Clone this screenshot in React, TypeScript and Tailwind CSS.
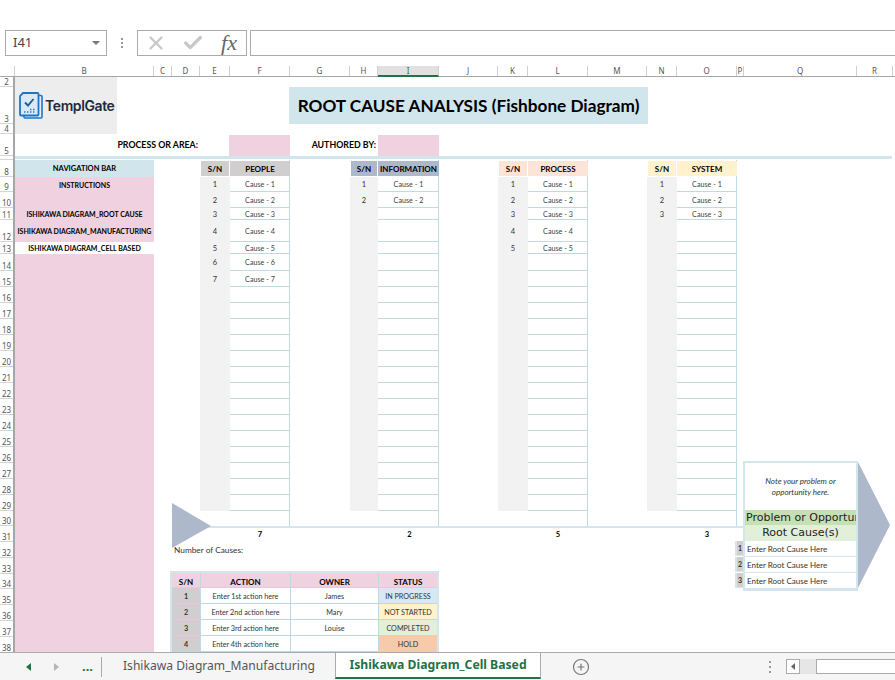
import { X, Check, CirclePlus } from "lucide-react"

const lato = "font-['Lato','Liberation_Sans',sans-serif]"

const columns: [string, string][] = [
  ["B", "w-[139px]"],
  ["C", "w-[18px]"],
  ["D", "w-[28px]"],
  ["E", "w-[30px]"],
  ["F", "w-[60px]"],
  ["G", "w-[60px]"],
  ["H", "w-[28px]"],
  ["I", "w-[61px]"],
  ["J", "w-[59px]"],
  ["K", "w-[30px]"],
  ["L", "w-[60px]"],
  ["M", "w-[59px]"],
  ["N", "w-[30px]"],
  ["O", "w-[60px]"],
  ["P", "w-[7px]"],
  ["Q", "w-[113px]"],
  ["R", "w-[36px]"],
]

const rowHeaders: [string, string][] = [
  ["2", "h-[10px]"],
  ["3", "h-[37px]"],
  ["4", "h-[10px]"],
  ["5", "h-[22px]"],
  ["", "h-[4px]"],
  ["8", "h-[17px]"],
  ["9", "h-[15px]"],
  ["10", "h-[16px]"],
  ["11", "h-[12px]"],
  ["12", "h-[22px]"],
  ["13", "h-[12px]"],
  ["14", "h-[17px]"],
  ["15", "h-[16px]"],
  ...Array.from({ length: 14 }, (_, i): [string, string] => [String(16 + i), "h-[16px]"]),
  ["30", "h-[15px]"],
  ["31", "h-[16px]"],
  ["32", "h-[16px]"],
  ["33", "h-[16px]"],
  ["34", "h-[15px]"],
  ["35", "h-[16px]"],
  ["36", "h-[16px]"],
  ["37", "h-[16px]"],
  ["38", "h-[16px]"],
]

const navItems: [string, string][] = [
  ["INSTRUCTIONS", "h-[31px] items-start pt-[3px] bg-[#efd1e0]"],
  ["ISHIKAWA DIAGRAM_ROOT CAUSE", "h-[12px] items-center bg-[#efd1e0]"],
  ["ISHIKAWA DIAGRAM_MANUFACTURING", "h-[22px] items-center bg-[#efd1e0]"],
  ["ISHIKAWA DIAGRAM_CELL BASED", "h-[12px] items-center bg-white"],
]

const causeTables = [
  { title: "PEOPLE", count: 7, causes: 7, head: "bg-[#d0cece]", width: "w-[90px]", cols: "grid-cols-[30px_60px]", gap: "ml-[46px]" },
  { title: "INFORMATION", count: 2, causes: 2, head: "bg-[#adb9ca]", width: "w-[89px]", cols: "grid-cols-[28px_61px]", gap: "ml-[60px]" },
  { title: "PROCESS", count: 5, causes: 5, head: "bg-[#fce4d6]", width: "w-[90px]", cols: "grid-cols-[30px_60px]", gap: "ml-[59px]" },
  { title: "SYSTEM", count: 3, causes: 3, head: "bg-[#fff2cc]", width: "w-[90px]", cols: "grid-cols-[30px_60px]", gap: "ml-[59px]" },
]

const actions = [
  { n: 1, action: "Enter 1st action here", owner: "James", status: "IN PROGRESS", tone: "bg-[#d9e7f3]" },
  { n: 2, action: "Enter 2nd action here", owner: "Mary", status: "NOT STARTED", tone: "bg-[#fff2cc]" },
  { n: 3, action: "Enter 3rd action here", owner: "Louise", status: "COMPLETED", tone: "bg-[#e2efd9]" },
  { n: 4, action: "Enter 4th action here", owner: "", status: "HOLD", tone: "bg-[#f7caac]" },
]

function Logo() {
  return (
    <div className="flex h-[57px] w-[102px] items-center gap-[2px] bg-[#ededed] pl-[4px]">
      <svg width="24" height="27" viewBox="0 0 24 27" className="shrink-0">
        <path d="M19.5 3.5h2.5a1 1 0 0 1 1 1V25a1 1 0 0 1-1 1H6a1 1 0 0 1-1-1v-1.5" fill="none" stroke="#1b75c9" strokeWidth="1.6" />
        <path d="M4 1h14.5a1 1 0 0 1 1 1v20.5a1 1 0 0 1-1 1H2a1 1 0 0 1-1-1V4z" fill="#dbe9f6" stroke="#1b75c9" strokeWidth="1.8" />
        <path d="M6 10.5l3 3 5.5-6.5" fill="none" stroke="#1a5f9e" strokeWidth="1.9" />
        <path d="M5 20h1.4M8 20h1.4M11 20h1.4M14 20h1.4M11 17.5h1.4M14 17.5h1.4" stroke="#1b75c9" strokeWidth="1.5" />
      </svg>
      <span className="font-['Inter',sans-serif] text-[14px] font-semibold tracking-[-0.4px] text-[#1f2a3a]">TemplGate</span>
    </div>
  )
}

function CauseTable({ table }: { table: (typeof causeTables)[number] }) {
  const rows = Array.from({ length: 22 }, (_, i) => i)
  return (
    <div
      className={`grid h-[366px] shrink-0 ${table.width} ${table.cols} ${table.gap} grid-rows-[17px_15px_16px_12px_22px_12px_17px_16px_repeat(14,16px)_15px] border-r border-[#bedbe5]`}
    >
      <div className={`m-[1px] flex items-center justify-center text-[8px] font-bold text-black ${table.head}`}>S/N</div>
      <div className={`my-[1px] flex items-center justify-center text-[8px] font-bold text-black ${table.head}`}>{table.title}</div>
      {rows.map((i) => (
        <div key={i} className="contents">
          <div className={`flex items-center justify-center pt-px text-[7.5px] text-[#333] ${i < 21 ? "bg-[#f2f2f2]" : ""}`}>
            {i < table.causes ? i + 1 : ""}
          </div>
          <div className={`flex items-center justify-center pt-[3px] text-[7.2px] text-[#444] ${i < 21 ? "border-b border-[#bedbe5]" : ""}`}>
            {i < table.causes ? `Cause - ${i + 1}` : ""}
          </div>
        </div>
      ))}
    </div>
  )
}

function ActionTable() {
  const cell = "flex items-center justify-center pt-[3px] border-b border-l border-[#bedbe5]"
  return (
    <div className="ml-[16px] w-[269px] border-x-2 border-t-2 border-[#d3e6ec]">
      <div className="grid grid-cols-[28px_90px_88px_59px] grid-rows-[15px_repeat(4,16px)] text-[7.2px] text-[#333]">
        <div className="flex items-center justify-center border-b border-[#bedbe5] bg-[#efd1e0] pt-[3px] text-[8px] font-bold text-black">S/N</div>
        <div className={`${cell} bg-[#efd1e0] text-[8px] font-bold text-black`}>ACTION</div>
        <div className={`${cell} bg-[#efd1e0] text-[8px] font-bold text-black`}>OWNER</div>
        <div className={`${cell} bg-[#efd1e0] text-[8px] font-bold text-black`}>STATUS</div>
        {actions.map((a) => (
          <div key={a.n} className="contents">
            <div className="flex items-center justify-center border-b border-[#bedbe5] bg-[#d0cece] pt-[3px] font-bold">{a.n}</div>
            <div className={cell}>{a.action}</div>
            <div className={cell}>{a.owner}</div>
            <div className={`${cell} ${a.tone}`}>{a.status}</div>
          </div>
        ))}
      </div>
    </div>
  )
}

function ProblemBox() {
  return (
    <div className="absolute left-[728px] top-[301px] w-[115px] border-2 border-[#d3e6ec] bg-white">
      <div className="flex h-[47px] flex-col items-center justify-center text-[8px] leading-[11px] italic text-[#333]">
        <span>Note your problem or</span>
        <span>opportunity here.</span>
      </div>
      <div className="h-[15px] overflow-hidden whitespace-nowrap bg-[#c5e0b3] pl-[1px] font-['DejaVu_Sans',sans-serif] text-[11px] leading-[15px] text-[#222]">
        Problem or Opportunity
      </div>
      <div className="h-[16px] bg-[#e2efd9] text-center font-['DejaVu_Sans',sans-serif] text-[11px] leading-[16px] text-[#222]">
        Root Cause(s)
      </div>
      {[1, 2, 3].map((n) => (
        <div key={n} className="relative flex h-[16px] items-center border-b border-[#d3e6ec] pl-[2px] text-[8px] text-[#333]">
          <span className="absolute left-[-10px] top-0 flex h-full w-[8px] items-center justify-center border-b border-l-2 border-[#d3e6ec] bg-[#d0cece] text-[7px] font-bold">
            {n}
          </span>
          Enter Root Cause Here
        </div>
      ))}
    </div>
  )
}

function Fishbone() {
  return (
    <div className={`relative h-[492px] overflow-hidden ${lato}`}>
      <div className="flex h-full">
        <div className="flex w-[139px] shrink-0 flex-col">
          <div className="flex h-[17px] items-center justify-center bg-[#d0e5ec] text-[7.5px] font-bold text-black">NAVIGATION BAR</div>
          {navItems.map(([label, cls]) => (
            <div key={label} className={`flex shrink-0 justify-center whitespace-nowrap text-[7px] font-bold text-black ${cls}`}>
              {label}
            </div>
          ))}
          <div className="flex-1 bg-[#efd1e0]" />
        </div>
        <div className="min-w-0 flex-1">
          <div className="flex">
            {causeTables.map((t) => (
              <CauseTable key={t.title} table={t} />
            ))}
          </div>
          <div className="ml-[18px] h-[2px] w-[572px] bg-[#d3e6ec]" />
          <div className="flex h-[14px] items-center">
            {causeTables.map((t) => (
              <div key={t.title} className={`${t.width} ${t.gap} shrink-0 pl-[30px] text-center text-[7.5px] font-bold text-black`}>
                {t.count}
              </div>
            ))}
          </div>
          <div className="ml-[20px] flex h-[16px] items-center text-[8.3px] text-[#333]">Number of Causes:</div>
          <div className="h-[13px]" />
          <ActionTable />
        </div>
      </div>
      <ProblemBox />
      {/* fish tail and head */}
      <svg width="40" height="46" className="absolute left-[157px] top-[343px]">
        <polygon points="0,0 39,23 0,45" fill="#adb9ca" />
      </svg>
      <svg width="34" height="128" className="absolute left-[843px] top-[302px]">
        <polygon points="0,0 32,63 0,126" fill="#adb9ca" />
      </svg>
    </div>
  )
}

export default function App() {
  return (
    <div className="flex h-[680px] w-[895px] flex-col overflow-hidden bg-white font-['Noto_Sans',sans-serif]">
      <div className="flex h-[56px] shrink-0 items-end pl-[5px]">
        <div className="flex h-[26px] w-[102px] items-center justify-between border border-[#ababab] pl-[7px] pr-[6px] text-[13px] text-[#444]">
          I41
          <span className="h-0 w-0 border-x-[4px] border-t-[4px] border-x-transparent border-t-[#777]" />
        </div>
        <div className="mx-[13px] flex h-[26px] w-[4px] flex-col items-center justify-center gap-[2px]">
          <span className="h-[2px] w-[2px] bg-[#999]" />
          <span className="h-[2px] w-[2px] bg-[#999]" />
          <span className="h-[2px] w-[2px] bg-[#999]" />
        </div>
        <div className="flex h-[26px] w-[110px] items-center justify-between border border-[#ababab] pl-[7px] pr-[9px]">
          <X className="h-[22px] w-[22px] text-[#c8c8c8]" strokeWidth={2.5} />
          <Check className="mr-[2px] h-[22px] w-[22px] text-[#c8c8c8]" strokeWidth={3.5} />
          <span className="font-['Liberation_Serif',serif] text-[22px] italic leading-none text-[#666]">fx</span>
        </div>
        <div className="ml-[3px] h-[26px] flex-1 border border-r-0 border-[#ababab]" />
      </div>
      <div className="h-[10px] shrink-0" />
      <div className="flex h-[11px] shrink-0 border-b border-[#a6a6a6] text-[8px] leading-[10px] text-[#555]">
        <div className="w-[15px] shrink-0 border-r border-[#d0d0d0]" />
        {columns.map(([name, w]) => (
          <div
            key={name}
            className={`shrink-0 border-r border-[#d0d0d0] text-center ${w} ${name === "I" ? "h-[11px] border-b-2 border-b-[#217346] bg-[#e1e1e1] text-[#217346]" : ""}`}
          >
            {name}
          </div>
        ))}
      </div>
      <div className="flex h-[575px] shrink-0">
        <div className="w-[15px] shrink-0 overflow-hidden border-r-2 border-[#a6a6a6] text-[8px] text-[#555]">
          {rowHeaders.map(([label, h], i) => (
            <div key={i} className={`flex items-end justify-center border-b border-[#d4d4d4] leading-[9px] ${h}`}>
              {label}
            </div>
          ))}
        </div>
        <div className="min-w-0 flex-1">
          <div className={`flex h-[57px] items-start ${lato}`}>
            <Logo />
            <div className="ml-[172px] mt-[10px] flex h-[37px] w-[359px] items-center justify-center bg-[#d0e5ec] pt-px text-[17.2px] font-bold text-black">
              ROOT CAUSE ANALYSIS (Fishbone Diagram)
            </div>
          </div>
          <div className={`flex h-[22px] items-center text-[8.8px] font-bold text-black ${lato}`}>
            <div className="w-[183px] text-right">PROCESS OR AREA:</div>
            <div className="ml-[31px] h-[21px] w-[61px] bg-[#efd1e0]" />
            <div className="w-[86px] text-right">AUTHORED BY:</div>
            <div className="ml-[2px] h-[21px] w-[61px] bg-[#efd1e0]" />
          </div>
          <div className="h-[3px] w-[877px] bg-[#d0e5ec]" />
          <div className="h-[1px]" />
          <Fishbone />
        </div>
      </div>
      <div className="flex h-[28px] shrink-0 items-center border-t border-[#ababab] bg-[#f5f5f5] text-[12.2px]">
        <svg width="6" height="8" className="ml-[26px] shrink-0"><polygon points="5,0 5,8 0,4" fill="#217346" /></svg>
        <svg width="6" height="8" className="ml-[22px] shrink-0"><polygon points="0,0 0,8 5,4" fill="#b5b5b5" /></svg>
        <span className="ml-[22px] w-[14px] text-[13px] font-bold leading-none text-[#217346]">...</span>
        <div className="ml-[5px] h-[20px] w-px bg-[#ababab]" />
        <span className="ml-[21px] w-[192px] whitespace-nowrap text-[12.1px] text-[#555]">Ishikawa Diagram_Manufacturing</span>
        <div className="ml-[20px] flex h-[26px] w-[206px] items-center justify-center self-start border-x border-b-2 border-x-[#ababab] border-b-[#217346] bg-white font-bold text-[#217346]">
          Ishikawa Diagram_Cell Based
        </div>
        <CirclePlus className="ml-[31px] h-[18px] w-[18px] shrink-0 text-[#777]" strokeWidth={1.6} />
        <div className="ml-[179px] flex h-[12px] w-[2px] shrink-0 flex-col justify-between">
          <span className="h-[2px] w-[2px] bg-[#999]" />
          <span className="h-[2px] w-[2px] bg-[#999]" />
          <span className="h-[2px] w-[2px] bg-[#999]" />
        </div>
        <div className="ml-[15px] flex h-[15px] w-[14px] shrink-0 items-center justify-center border border-[#ababab] bg-white">
          <svg width="5" height="7"><polygon points="4,0 4,7 0,3.5" fill="#666" /></svg>
        </div>
        <div className="h-[15px] w-[16px] shrink-0 bg-[#e6e6e6]" />
        <div className="h-[15px] flex-1 border border-r-0 border-[#ababab] bg-white" />
      </div>
    </div>
  )
}
